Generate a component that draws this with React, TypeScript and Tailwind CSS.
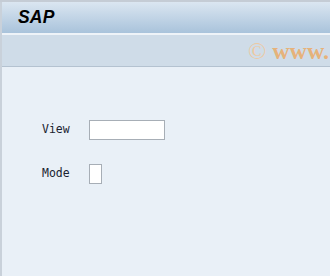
export default function App() {
  return (
    <div className="w-[330px] h-[276px] overflow-hidden bg-[#e9f0f7] flex flex-col">
      <div className="h-[2px] bg-[#c5ccd5] shrink-0" />
      <div className="flex-1 flex flex-col border-l-2 border-[#c9d1da]">
        <div className="h-[31px] shrink-0 bg-gradient-to-b from-[#dbe6f1] to-[#a9c3db] flex items-center pl-[16px]">
          <span className="text-[17.5px] font-black italic text-black font-['Liberation_Sans',sans-serif] leading-none tracking-[0.2px]">
            SAP
          </span>
        </div>
        <div className="h-[2px] bg-[#eef3f8] shrink-0" />
        <div className="h-[32px] shrink-0 bg-[#cfdce8] border-b border-[#b4c2d0] flex items-center overflow-hidden whitespace-nowrap">
          <span className="pl-[246px] text-[24px] font-bold text-[#e6b27a] font-['Liberation_Serif',serif] leading-none">
            <span className="font-normal text-[#edc9a2]">©</span> www.
          </span>
        </div>
        <div className="flex-1 pl-[40px] pt-[53px] font-['DejaVu_Sans_Mono',monospace] text-[11.5px] text-[#1a2330]">
          <div className="flex items-center h-[20px]">
            <span className="w-[47px]">View</span>
            <div className="w-[76px] h-[20px] bg-white border border-[#a7aeb6]" />
          </div>
          <div className="flex items-center h-[20px] mt-[24px]">
            <span className="w-[47px]">Mode</span>
            <div className="w-[13px] h-[20px] bg-white border border-[#a7aeb6]" />
          </div>
        </div>
      </div>
    </div>
  );
}
